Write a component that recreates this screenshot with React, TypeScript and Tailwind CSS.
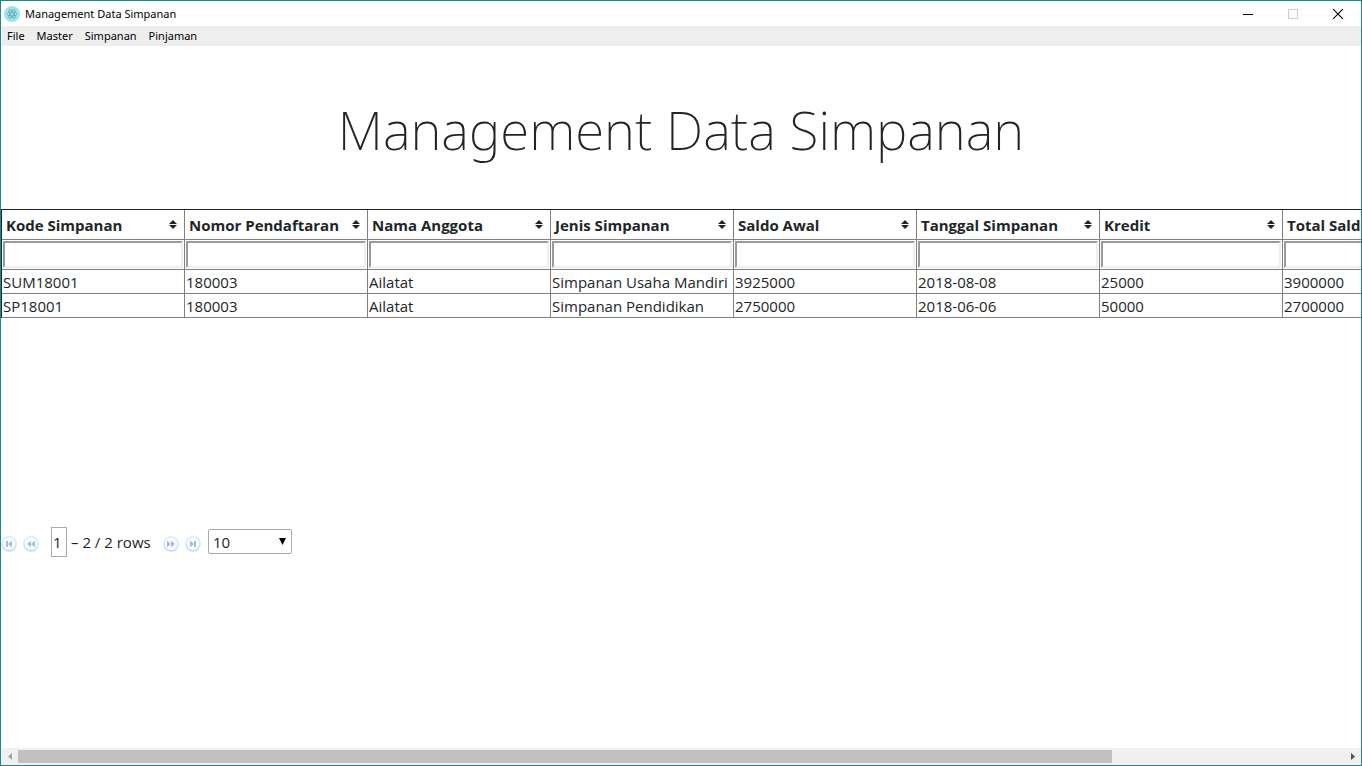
import { useState } from "react";

const menus = ["File", "Master", "Simpanan", "Pinjaman"];

const columns = [
  "Kode Simpanan",
  "Nomor Pendaftaran",
  "Nama Anggota",
  "Jenis Simpanan",
  "Saldo Awal",
  "Tanggal Simpanan",
  "Kredit",
  "Total Saldo",
];

const records = [
  ["SUM18001", "180003", "Ailatat", "Simpanan Usaha Mandiri", "3925000", "2018-08-08", "25000", "3900000"],
  ["SP18001", "180003", "Ailatat", "Simpanan Pendidikan", "2750000", "2018-06-06", "50000", "2700000"],
];

function AppIcon() {
  return (
    <svg width="16" height="16" viewBox="0 0 16 16" fill="none" aria-hidden="true">
      <circle cx="8" cy="8" r="8" fill="#9fe3ee" />
      <g stroke="#5f9ba8" strokeWidth="0.6">
        <ellipse cx="8" cy="8" rx="5" ry="2" />
        <ellipse cx="8" cy="8" rx="5" ry="2" transform="rotate(60 8 8)" />
        <ellipse cx="8" cy="8" rx="5" ry="2" transform="rotate(120 8 8)" />
      </g>
      <circle cx="8" cy="8" r="0.6" fill="#4f8f9c" />
    </svg>
  );
}

function TitleBar() {
  return (
    <header className="flex h-[25px] shrink-0 items-center justify-between bg-white pl-[3px]">
      <div className="flex items-center gap-[5px] text-black">
        <AppIcon />
        <span className="font-['Noto_Sans','Open_Sans',sans-serif] text-[11px]">Management Data Simpanan</span>
      </div>
      <div className="flex h-6 items-center">
        <button aria-label="Minimize" className="grid w-[46px] place-items-center">
          <svg width="10" height="10" shapeRendering="crispEdges"><path d="M0 5h10v1H0z" fill="#000" /></svg>
        </button>
        <button aria-label="Maximize" disabled className="grid w-11 place-items-center">
          <svg width="10" height="10" fill="none"><path d="M.5.5h9v9h-9z" stroke="#ccc" /></svg>
        </button>
        <button aria-label="Close" className="grid w-[46px] place-items-center">
          <svg width="10" height="10"><path d="M0 0l10 10M10 0L0 10" stroke="#000" strokeWidth="1.1" /></svg>
        </button>
      </div>
    </header>
  );
}

function SortIcon() {
  return (
    <svg width="8" height="9" viewBox="0 0 8 9" fill="#212529" aria-hidden="true">
      <path d="M4 0l4 4H0zM0 5h8l-4 4z" />
    </svg>
  );
}

function PagerButton({ label, path }: { label: string; path: string }) {
  return (
    <button aria-label={label} className="grid size-4 place-items-center">
      <svg width="16" height="16" viewBox="0 0 16 16">
        <circle cx="8" cy="8" r="8" fill="#dfebf9" />
        <circle cx="8" cy="8.6" r="6.6" fill="#c3cfde" />
        <circle cx="8" cy="7.9" r="6.3" fill="#fbfdff" />
        <path d={path} fill="#9dc0ea" />
      </svg>
    </button>
  );
}

function DataTable() {
  return (
    <table className="w-[1465px] table-fixed border-separate border-spacing-0 border-t border-l border-[#212529] text-left">
      <thead>
        <tr className="h-[30px]">
          {columns.map((name) => (
            <th key={name} className="border-r border-b border-[#808080] p-0 pr-[7px] pl-1 font-bold">
              <button className="flex w-full items-center justify-between text-left text-[15px] leading-6 whitespace-nowrap">
                {name}
                <SortIcon />
              </button>
            </th>
          ))}
        </tr>
        <tr>
          {columns.map((name) => (
            <td key={name} className="border-r border-b border-[#808080] p-px">
              <input
                aria-label={"Filter " + name}
                className="block h-[27px] w-full border-2 border-t-[#9a9a9a] border-r-[#eee] border-b-[#eee] border-l-[#9a9a9a] px-px text-[15px] outline-none"
              />
            </td>
          ))}
        </tr>
      </thead>
      <tbody className="leading-[22px]">
        {records.map((row) => (
          <tr key={row[0]}>
            {row.map((cell, i) => (
              <td key={columns[i]} className="overflow-hidden border-r border-b border-[#808080] p-0 pt-px pl-px whitespace-nowrap">
                {cell}
              </td>
            ))}
          </tr>
        ))}
      </tbody>
    </table>
  );
}

function Pager() {
  const [page, setPage] = useState("1");
  return (
    <div className="flex h-[30px] items-center">
      <div className="flex gap-[6px] pt-1">
        <PagerButton label="First page" path="M5 5h2v6H5zM7 8l4-3.5v7z" />
        <PagerButton label="Previous page" path="M4 8l4-3.5v7zM8 8l4-3.5v7z" />
      </div>
      <input
        aria-label="Page"
        value={page}
        onChange={(e) => setPage(e.target.value)}
        className="ml-3 h-[30px] w-4 border border-[#a9a9a9] px-px outline-none"
      />
      <span className="ml-1 w-[84px] whitespace-nowrap">– 2 / 2 rows</span>
      <div className="ml-2 flex gap-[6px] pt-1">
        <PagerButton label="Next page" path="M4 4.5L8 8l-4 3.500zM8 4.500L12 8l-4 3.500z" />
        <PagerButton label="Last page" path="M5 4.500L9 8l-4 3.500zM9 5h2v6H9z" />
      </div>
      <div className="relative ml-[7px]">
        <select
          aria-label="Rows per page"
          defaultValue="10"
          className="-mt-px block h-[25px] w-[84px] appearance-none rounded-[2px] border border-[#a9a9a9] bg-white pl-1 leading-5 outline-none"
        >
          <option>10</option>
          <option>25</option>
          <option>50</option>
        </select>
        <svg width="7" height="7" className="pointer-events-none absolute top-2 right-[6px]" aria-hidden="true">
          <path d="M0 0h7L3.500 7z" fill="#000" />
        </svg>
      </div>
    </div>
  );
}

function HorizontalScrollbar() {
  return (
    <div className="flex h-[17px] shrink-0 items-center bg-[#f0f0f0]">
      <button aria-label="Scroll left" className="grid w-[17px] place-items-center">
        <svg width="4" height="7"><path d="M4 0v7L0 3.500z" fill="#a3a3a3" /></svg>
      </button>
      <div className="flex-1">
        <div className="h-[13px] w-[82.500%] bg-[#c1c1c1]" />
      </div>
      <button aria-label="Scroll right" className="grid w-[17px] place-items-center">
        <svg width="4" height="7"><path d="M0 0v7l4-3.500z" fill="#505050" /></svg>
      </button>
    </div>
  );
}

export default function App() {
  return (
    <div className="flex h-screen flex-col overflow-hidden border border-[#1c8a8c] bg-white font-['Open_Sans','Noto_Sans',sans-serif] text-[15px] leading-6 text-[#212529]">
      <TitleBar />
      <nav className="flex h-5 shrink-0 items-center gap-3 bg-[#eee] pl-[6px] font-['Noto_Sans','Open_Sans',sans-serif] text-[11px] text-black">
        {menus.map((menu) => (
          <button key={menu}>{menu}</button>
        ))}
      </nav>
      <main className="min-h-0 flex-1 overflow-hidden">
        <h1 className="pt-[50px] pb-[46px] text-center font-['Noto_Sans','Open_Sans',sans-serif] text-[53px] leading-[67px] font-extralight">
          Management Data Simpanan
        </h1>
        <div className="h-[318px] overflow-hidden">
          <DataTable />
        </div>
        <Pager />
      </main>
      <HorizontalScrollbar />
    </div>
  );
}
